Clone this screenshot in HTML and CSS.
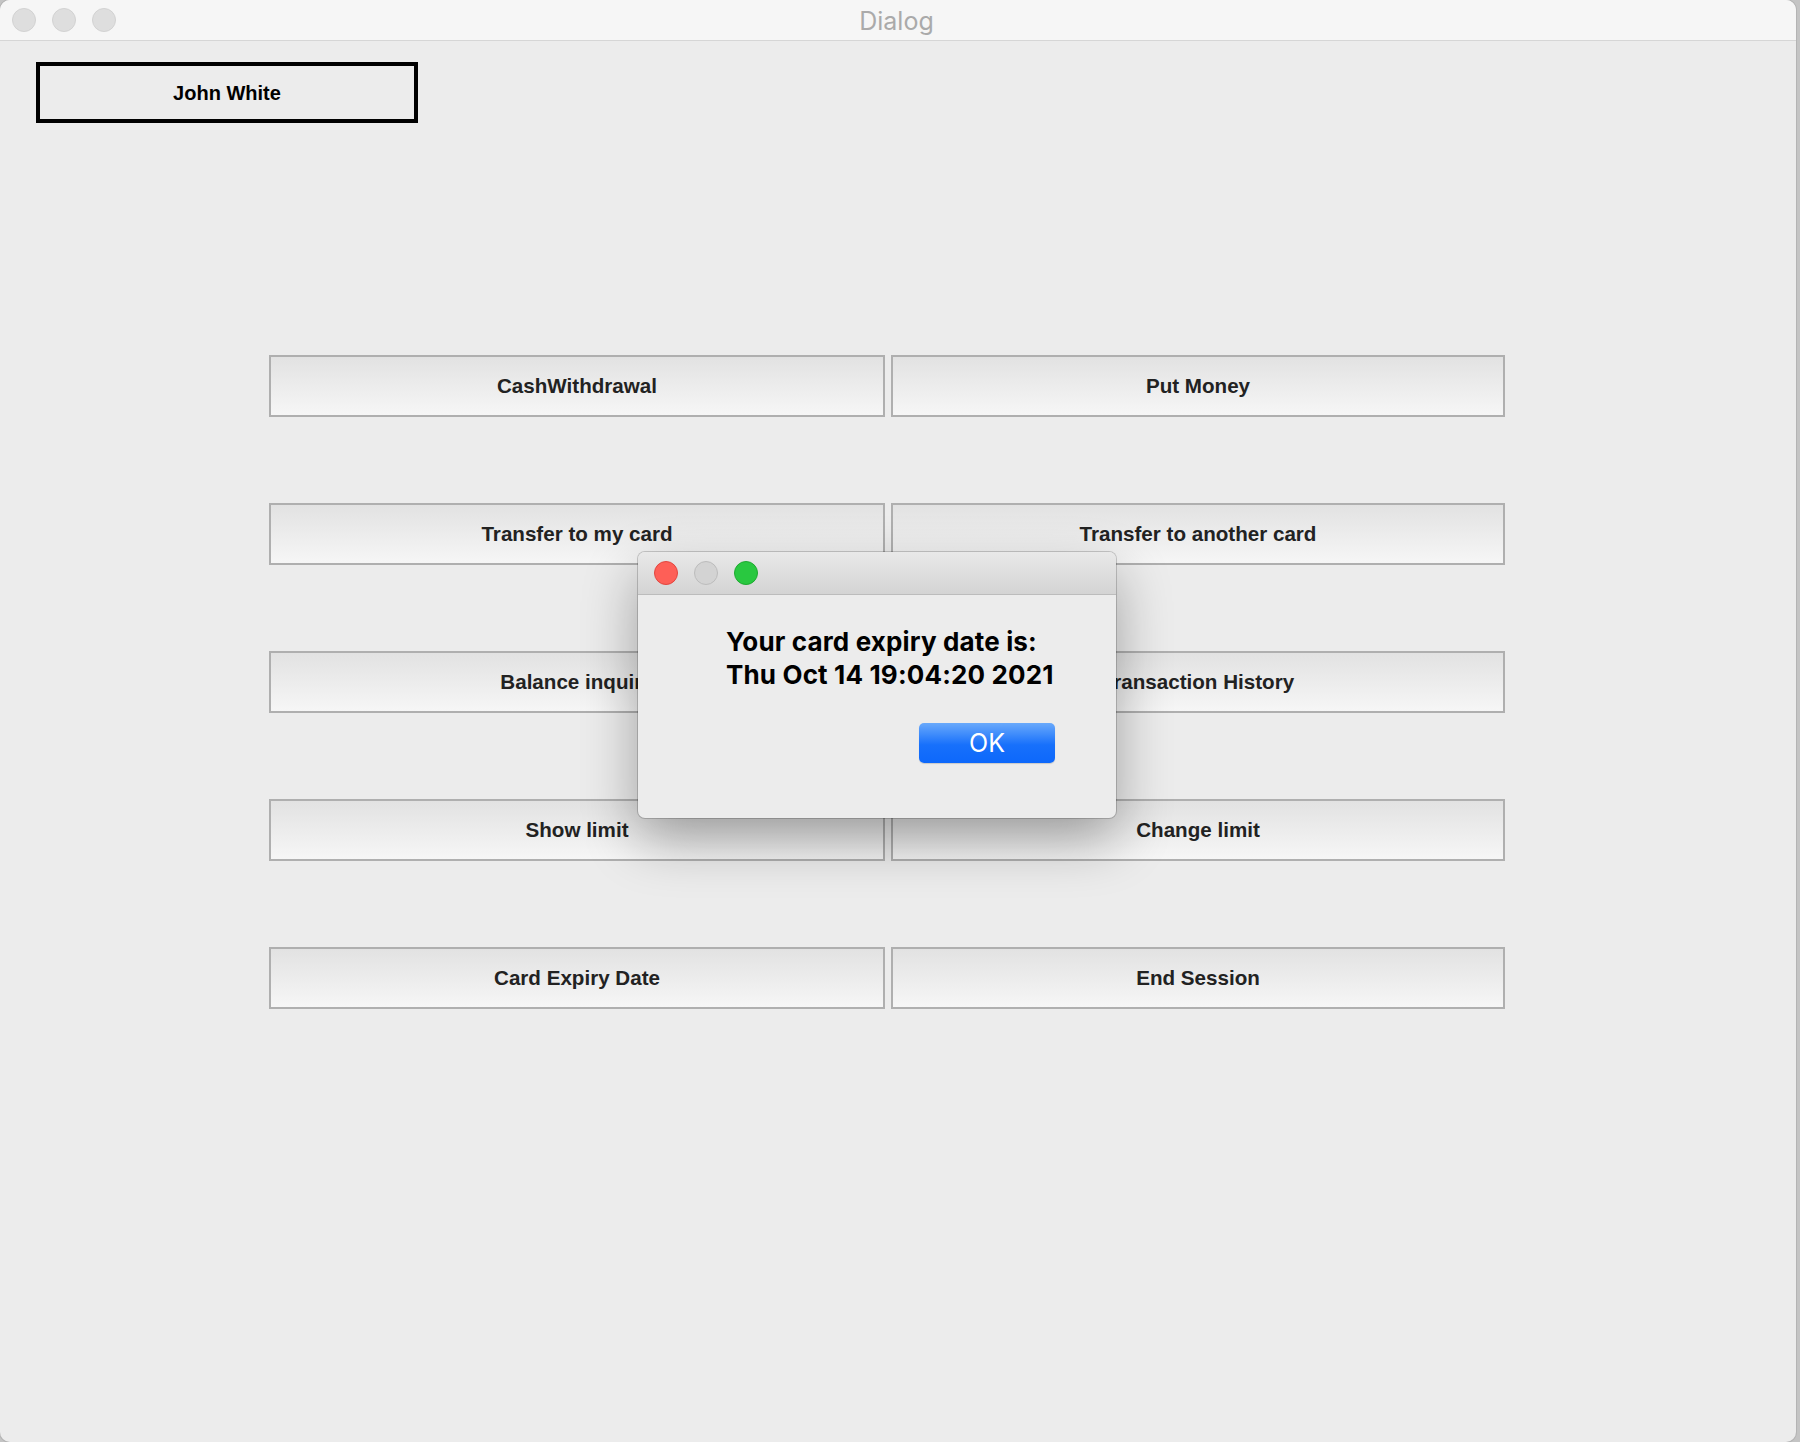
FILE: index.html
```html
<!DOCTYPE html>
<html>
<head>
<meta charset="utf-8">
<title>Dialog</title>
<link rel="stylesheet" href="styles.css">
</head>
<body>
<div class="window">
  <div class="titlebar">
    <div class="lights">
      <span class="light"></span>
      <span class="light"></span>
      <span class="light"></span>
    </div>
    <div class="title">Dialog</div>
  </div>
  <div class="content">
    <div class="user">John White</div>
    <div class="grid">
      <div class="btn">CashWithdrawal</div>
      <div class="btn">Put Money</div>
      <div class="btn">Transfer to my card</div>
      <div class="btn">Transfer to another card</div>
      <div class="btn">Balance inquiry</div>
      <div class="btn">Transaction History</div>
      <div class="btn">Show limit</div>
      <div class="btn">Change limit</div>
      <div class="btn">Card Expiry Date</div>
      <div class="btn">End Session</div>
    </div>
  </div>
  <div class="dialog">
    <div class="dlg-titlebar">
      <span class="dl red"></span>
      <span class="dl gray"></span>
      <span class="dl green"></span>
    </div>
    <div class="dlg-body">
      <div class="msg">Your card expiry date is:<br>Thu Oct 14 19:04:20 2021</div>
      <div class="actions"><div class="ok">OK</div></div>
    </div>
  </div>
</div>
</body>
</html>
```
FILE: styles.css
```css
html, body {
  margin: 0;
  padding: 0;
}
body {
  width: 1800px;
  height: 1442px;
  background: #c4c4c4;
  overflow: hidden;
  font-family: "Liberation Sans", Arial, sans-serif;
}
.window {
  position: relative;
  width: 1796px;
  height: 1442px;
  background: #ececec;
  border-radius: 10px;
  box-shadow: 0 0 0 1px #b4b4b4;
  overflow: hidden;
}
.titlebar {
  position: relative;
  height: 40px;
  background: #f6f6f6;
  border-bottom: 1px solid #d6d6d6;
  display: flex;
  align-items: center;
  justify-content: center;
}
.lights {
  position: absolute;
  left: 12px;
  top: 8px;
  display: flex;
  gap: 16px;
}
.light {
  width: 22px;
  height: 22px;
  border-radius: 50%;
  background: #dedede;
  border: 1px solid #d2d2d2;
}
.title {
  font-family: Inter, "Liberation Sans", sans-serif;
  font-size: 25px;
  color: #aaaaaa;
  margin-left: -3px;
  padding-top: 2px;
}
.content {
  padding: 21px 0 0 36px;
}
.user {
  box-sizing: border-box;
  width: 382px;
  height: 61px;
  border: 4px solid #000;
  display: flex;
  align-items: center;
  justify-content: center;
  font-weight: bold;
  font-size: 20px;
  color: #000;
  padding-top: 1px;
}
.grid {
  margin: 232px 0 0 233px;
  display: grid;
  grid-template-columns: 616px 614px;
  grid-auto-rows: 62px;
  column-gap: 6px;
  row-gap: 86px;
}
.btn {
  box-sizing: border-box;
  border: 2px solid #afafaf;
  background: linear-gradient(#e2e2e2, #f6f6f6);
  display: flex;
  align-items: center;
  justify-content: center;
  font-weight: bold;
  font-size: 20.6px;
  color: #222;
}
.dialog {
  position: absolute;
  left: 638px;
  top: 552px;
  width: 478px;
  height: 266px;
  border-radius: 7px;
  background: #ececec;
  box-shadow: 0 0 0 1px rgba(0,0,0,0.18), 0 22px 55px rgba(0,0,0,0.33);
  overflow: hidden;
  display: flex;
  flex-direction: column;
}
.dlg-titlebar {
  height: 42px;
  background: linear-gradient(#e9e9e9, #d4d4d4);
  border-bottom: 1px solid #bcbcbc;
  display: flex;
  align-items: center;
  gap: 16px;
  padding-left: 16px;
}
.dl {
  box-sizing: border-box;
  width: 24px;
  height: 24px;
  border-radius: 50%;
}
.red { background: #fe5f57; border: 1px solid #e2463f; }
.gray { background: #d3d3d3; border: 1px solid #bcbcbc; }
.green { background: #29c840; border: 1px solid #1eaa30; }
.dlg-body {
  padding: 30px 61px 0 88px;
  display: flex;
  flex-direction: column;
}
.msg {
  font-family: Inter, "Liberation Sans", sans-serif;
  font-weight: 700;
  font-size: 26px;
  letter-spacing: 0.15px;
  line-height: 33px;
  color: #000;
  white-space: nowrap;
}
.actions {
  margin-top: 32px;
  display: flex;
  justify-content: flex-end;
}
.ok {
  width: 136px;
  height: 40px;
  border-radius: 5px;
  background: linear-gradient(#69a9fb, #1770fb 55%, #0d68fb);
  color: #fff;
  font-family: Inter, "Liberation Sans", sans-serif;
  font-size: 25px;
  display: flex;
  align-items: center;
  justify-content: center;
  box-shadow: 0 1px 1px rgba(0,0,0,0.15);
}
```
